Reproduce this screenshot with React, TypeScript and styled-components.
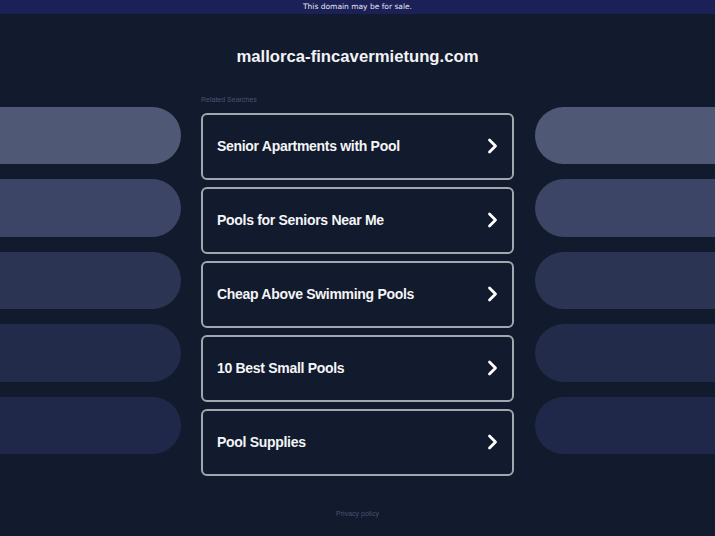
import styled, { createGlobalStyle } from 'styled-components';

const GlobalStyle = createGlobalStyle`
  html, body {
    margin: 0;
    padding: 0;
    background: #121a2d;
    font-family: 'Liberation Sans', Arial, sans-serif;
    overflow: hidden;
  }
`;

const TopBar = styled.div`
  height: 14px;
  line-height: 14px;
  background: #1b2057;
  color: #e6e8f0;
  font-family: 'DejaVu Sans', sans-serif;
  font-size: 7.5px;
  text-align: center;
`;

const Title = styled.h1`
  margin: 33px 0 0;
  font-size: 16.7px;
  line-height: 20px;
  font-weight: 700;
  color: #f2f3f5;
  text-align: center;
`;

const Row = styled.div`
  display: flex;
  gap: 20.5px;
  margin-top: 28px;
`;

const Side = styled.div`
  flex: 1;
  display: flex;
  flex-direction: column;
  gap: 15px;
  padding-top: 11.7px;
`;

const Pill = styled.div<{ $tone: string; $side: 'left' | 'right' }>`
  height: 57.5px;
  background: ${(p) => p.$tone};
  border-radius: ${(p) => (p.$side === 'left' ? '0 29px 29px 0' : '29px 0 0 29px')};
`;

const Center = styled.div`
  width: 313px;
  display: flex;
  flex-direction: column;
`;

const Label = styled.div`
  font-size: 7px;
  line-height: 10px;
  color: #4a5370;
  margin-bottom: 7.7px;
`;

const List = styled.div`
  display: flex;
  flex-direction: column;
  gap: 7px;
`;

const Card = styled.a`
  box-sizing: border-box;
  height: 67px;
  border: 2px solid #a2a6ae;
  border-radius: 6px;
  display: flex;
  align-items: center;
  justify-content: space-between;
  padding: 0 14px 0 14px;
  color: #f4f5f7;
  font-size: 14px;
  letter-spacing: -0.3px;
  font-weight: 700;
  text-decoration: none;
`;

const Footer = styled.div`
  margin-top: 33px;
  text-align: center;
  font-size: 7px;
  line-height: 10px;
  color: #4a5370;
`;

const Chevron = () => (
  <svg width="12" height="16" viewBox="0 0 12 16" fill="none">
    <path d="M3.5 2 L9.5 8 L3.5 14" stroke="#ffffff" strokeWidth="2.8" strokeLinecap="round" strokeLinejoin="round" />
  </svg>
);

const tones = ['#4f5976', '#3c4565', '#2c3453', '#222b4a', '#1f2848'];
const searches = [
  'Senior Apartments with Pool',
  'Pools for Seniors Near Me',
  'Cheap Above Swimming Pools',
  '10 Best Small Pools',
  'Pool Supplies',
];

export default function App() {
  return (
    <>
      <GlobalStyle />
      <TopBar>This domain may be for sale.</TopBar>
      <Title>mallorca-fincavermietung.com</Title>
      <Row>
        <Side>
          {tones.map((t) => (
            <Pill key={t} $tone={t} $side="left" />
          ))}
        </Side>
        <Center>
          <Label>Related Searches</Label>
          <List>
            {searches.map((s) => (
              <Card key={s} href="#">
                {s}
                <Chevron />
              </Card>
            ))}
          </List>
        </Center>
        <Side>
          {tones.map((t) => (
            <Pill key={t} $tone={t} $side="right" />
          ))}
        </Side>
      </Row>
      <Footer>Privacy policy</Footer>
    </>
  );
}
